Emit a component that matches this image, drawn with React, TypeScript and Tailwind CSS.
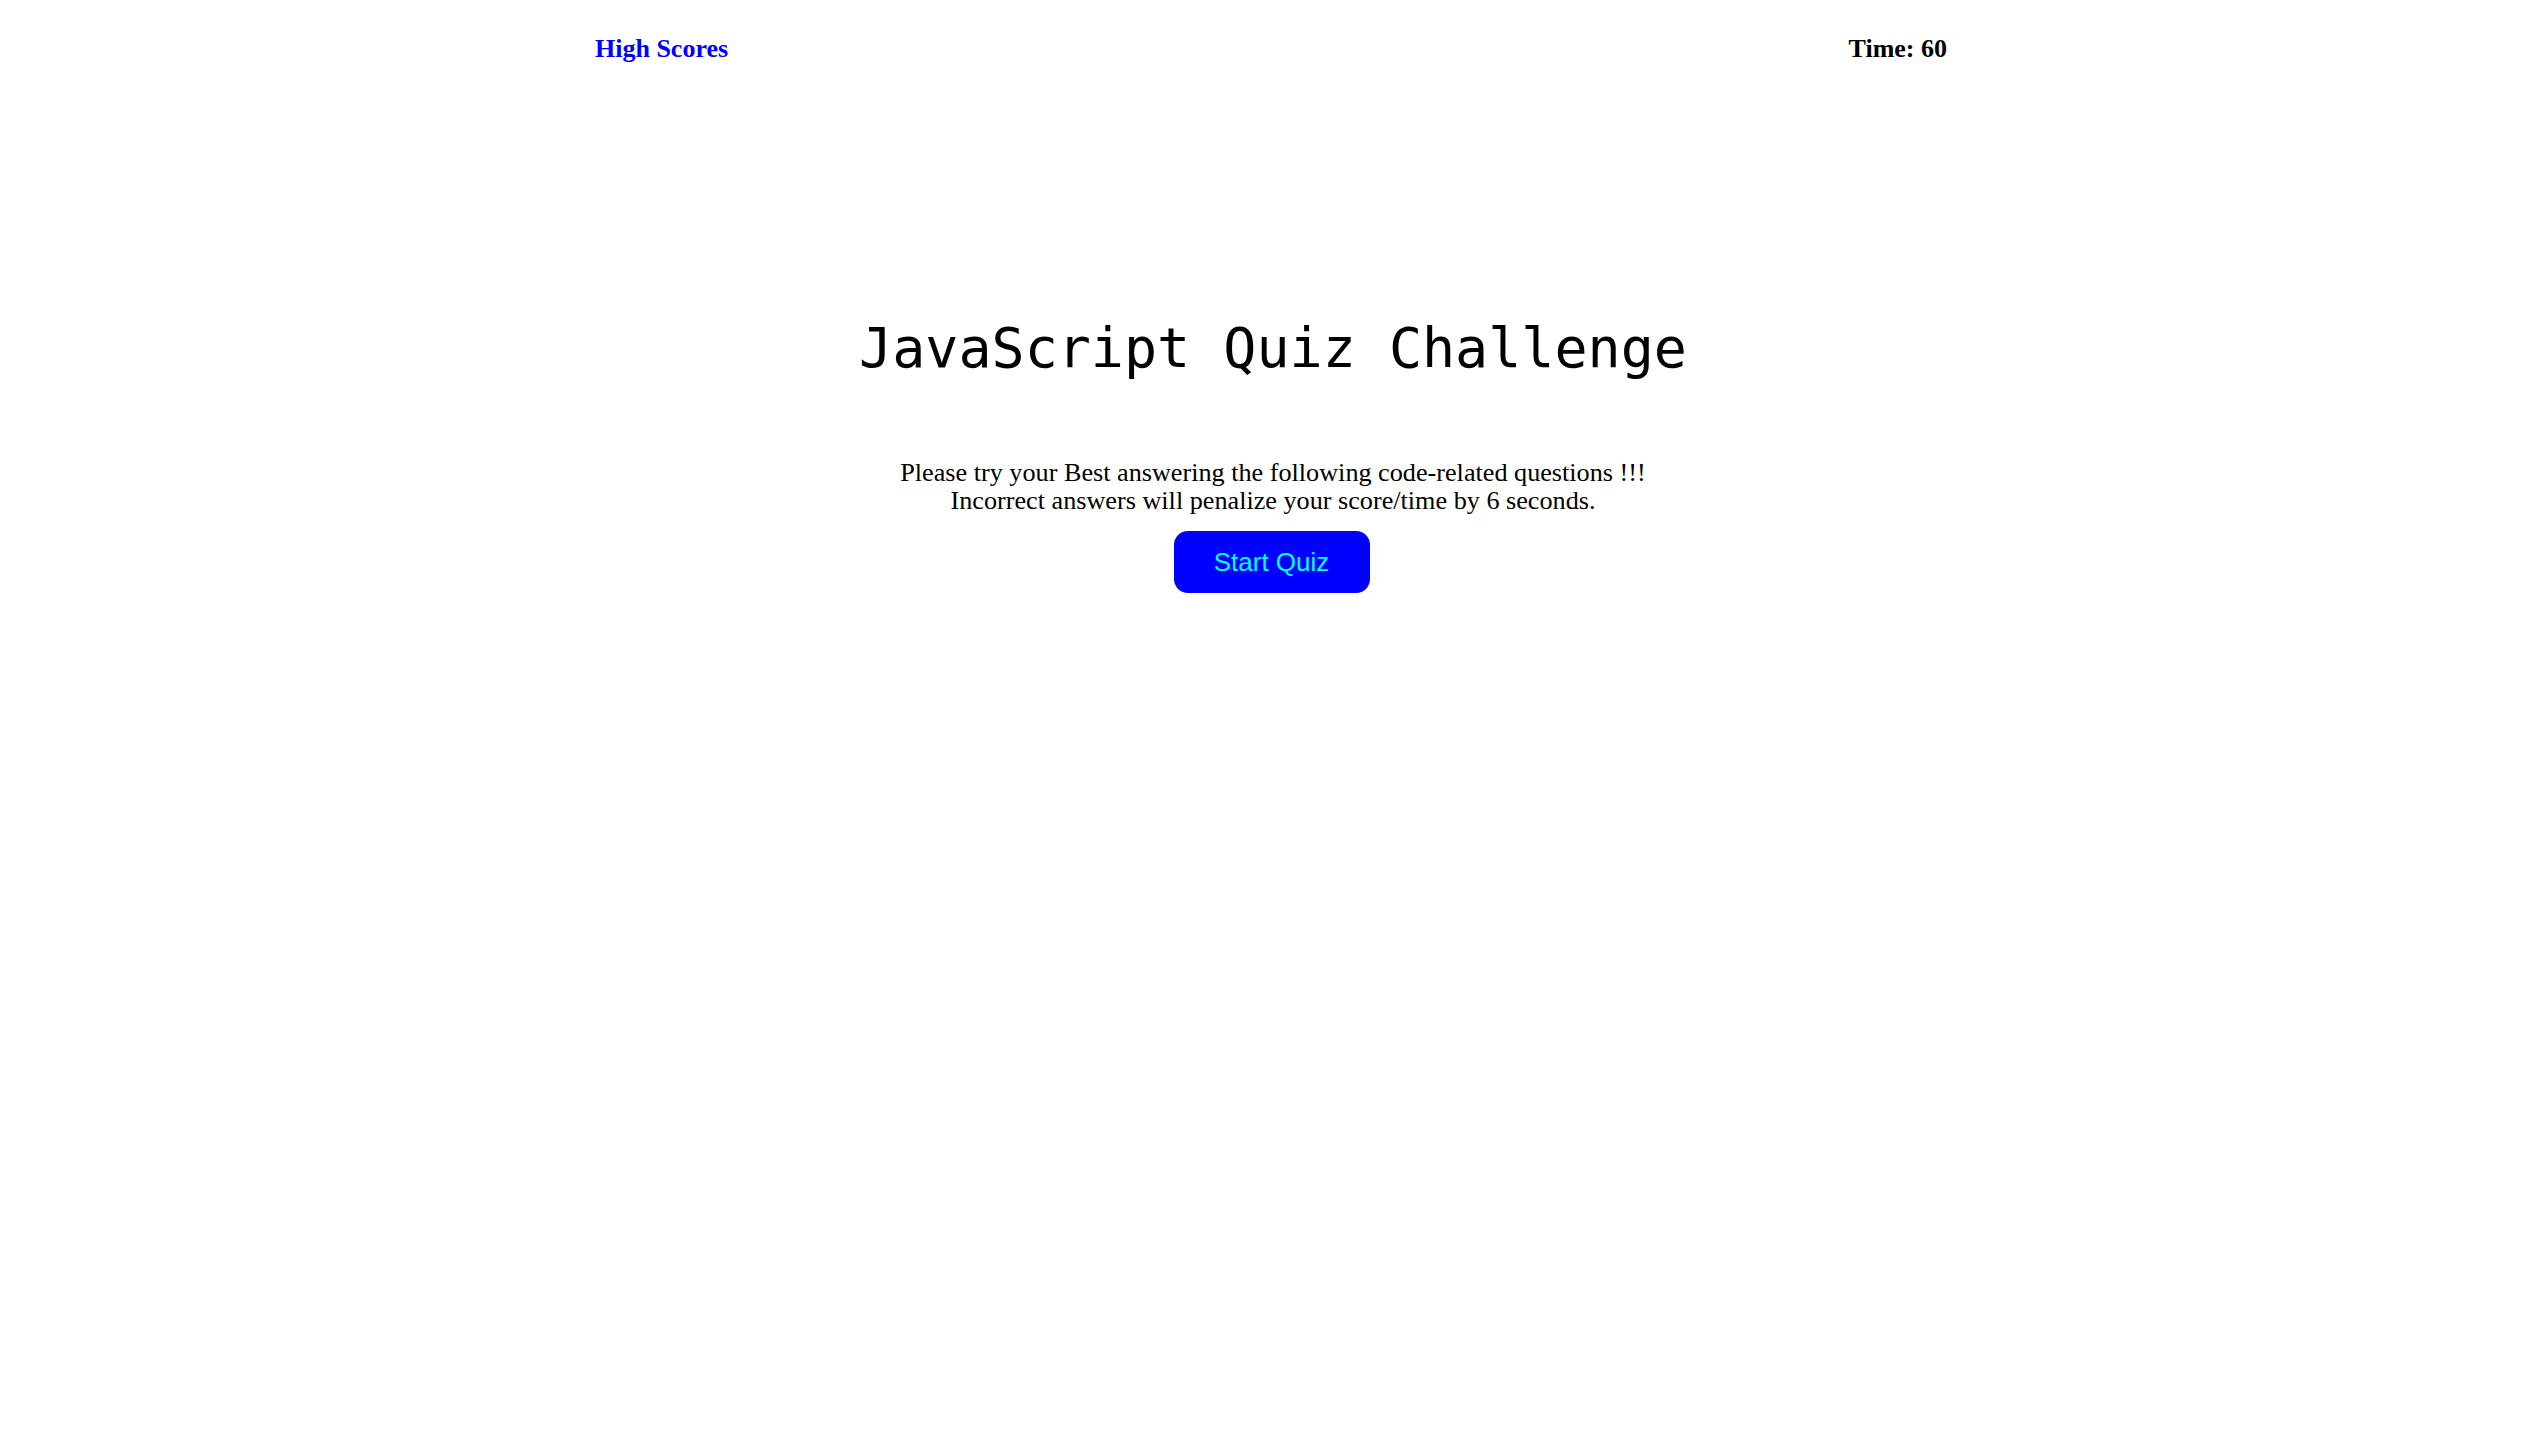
import React from "react";

// Écran d'accueil du quiz : barre du haut (scores / minuteur), titre,
// consignes et bouton de départ.
export default function App() {
  return (
    <div className="min-h-screen bg-white text-black">
      <header className="flex items-start justify-between pl-[595px] pr-[599px] pt-[34px] font-['Liberation_Serif','Times_New_Roman',serif] font-bold">
        <a href="#" className="text-[26px] leading-[30px] text-[#0000ff]">
          High Scores
        </a>
        <span className="text-[26px] leading-[30px]">Time: 60</span>
      </header>

      <main className="flex flex-col items-center">
        <h1 className="mt-[252px] font-['DejaVu_Sans_Mono',monospace] text-[55px] font-normal leading-[64px]">
          JavaScript Quiz Challenge
        </h1>
        <p className="mt-[79px] text-center font-['Liberation_Serif','Times_New_Roman',serif] text-[26.2px] leading-[28px]">
          Please try your Best answering the following code-related questions !!!
          <br />
          Incorrect answers will penalize your score/time by 6 seconds.
        </p>
        <button
          type="button"
          className="mr-[3px] mt-[16px] flex h-[62px] w-[196px] items-center justify-center rounded-[14px] bg-[#0000ff] font-['Liberation_Sans',Arial,sans-serif] text-[26px] text-[#00ffff]"
        >
          Start Quiz
        </button>
      </main>
    </div>
  );
}
